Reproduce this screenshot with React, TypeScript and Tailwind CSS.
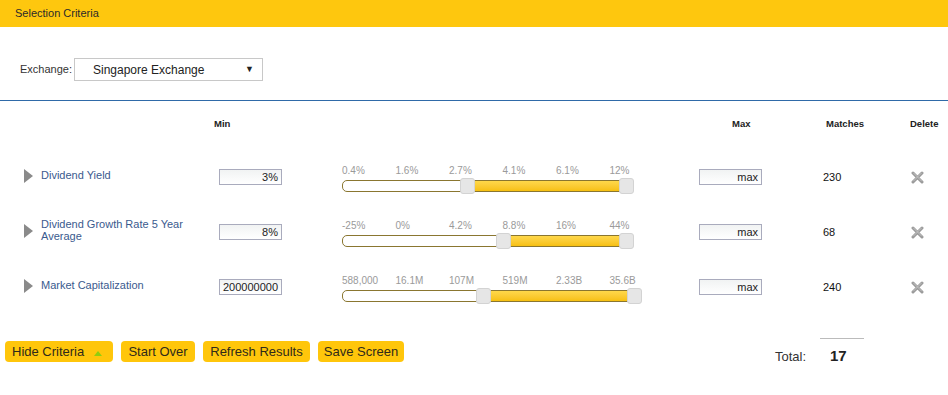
import React from "react";

type Criterion = {
  label: string[];
  min: string;
  ticks: string[];
  trackW: number;
  lo: number;
  hi: number;
  matches: string;
};

const CRITERIA: Criterion[] = [
  { label: ["Dividend Yield"], min: "3%", ticks: ["0.4%", "1.6%", "2.7%", "4.1%", "6.1%", "12%"], trackW: 291, lo: 118, hi: 277, matches: "230" },
  { label: ["Dividend Growth Rate 5 Year", "Average"], min: "8%", ticks: ["-25%", "0%", "4.2%", "8.8%", "16%", "44%"], trackW: 291, lo: 154, hi: 277, matches: "68" },
  { label: ["Market Capitalization"], min: "200000000", ticks: ["588,000", "16.1M", "107M", "519M", "2.33B", "35.6B"], trackW: 299, lo: 134, hi: 285, matches: "240" },
];

function DeleteIcon() {
  return (
    <svg width="13" height="13" viewBox="0 0 13 13">
      <path d="M2 2 L11 11 M11 2 L2 11" stroke="#9a9a9a" strokeWidth="3" strokeLinecap="round" />
      <path d="M2.5 2 L10.5 10 M10.5 2 L2.5 10" stroke="#c4c4c4" strokeWidth="1" strokeLinecap="round" />
    </svg>
  );
}

function Slider({ c }: { c: Criterion }) {
  return (
    <div className="w-[300px] flex flex-col mt-[4px]">
      <div className="grid grid-cols-6 w-[321px] text-[10px] leading-[12px] text-[#9a9a9a]">
        {c.ticks.map((t) => (
          <span key={t}>{t}</span>
        ))}
      </div>
      <div className="relative h-[16px] mt-[1px]" style={{ width: c.trackW }}>
        <div className="absolute left-0 right-0 top-[2px] h-[12px] rounded-[5px] border border-[#8a7630] bg-white" />
        <div
          className="absolute top-[2px] h-[12px] border-y border-[#8a7630] bg-gradient-to-b from-[#ffd84a] to-[#f7c00d]"
          style={{ left: c.lo + 7, width: c.hi - c.lo }}
        />
        <div
          className="absolute top-0 w-[15px] h-[16px] rounded-[3px] border border-[#d3d3d3] bg-[#e6e6e6]"
          style={{ left: c.lo }}
        />
        <div
          className="absolute top-0 w-[15px] h-[16px] rounded-[3px] border border-[#d3d3d3] bg-[#e6e6e6]"
          style={{ left: c.hi }}
        />
      </div>
    </div>
  );
}

function ValueBox({ value }: { value: string }) {
  return (
    <div className="w-[63px] h-[16px] border border-[#a9abbd] bg-gradient-to-b from-[#f1f3f3] to-white text-right pr-[3px] text-[11px] leading-[14px] text-[#222]">
      {value}
    </div>
  );
}

const btn =
  "h-[21px] px-[4px] rounded-[4px] bg-[#ffc60b] text-[13px] text-[#2f2a1a] flex items-center whitespace-nowrap";

export default function App() {
  return (
    <div className="w-[948px] h-[395px] bg-white font-['Liberation_Sans',Arial,sans-serif] text-[#333] overflow-hidden">
      {/* title bar */}
      <div className="h-[27px] bg-[#fec70e] pl-[15px] flex items-center text-[11px] text-[#2a2a2a]">
        Selection Criteria
      </div>

      {/* exchange */}
      <div className="h-[73px] flex items-center pl-[20px] pt-[12px]">
        <span className="text-[11px] text-[#333] mr-[2px]">Exchange:</span>
        <div className="w-[189px] h-[23px] border border-[#c8c8c8] flex items-center pl-[18px] pr-[8px] text-[12px] text-[#222]">
          <span className="flex-1">Singapore Exchange</span>
          <span className="text-[9px]">▼</span>
        </div>
      </div>
      <div className="h-px bg-[#2f6aa8]" />

      {/* column headers */}
      <div className="flex pt-[17px] text-[9.5px] font-semibold text-[#222] leading-[12px]">
        <span className="w-[214px]" />
        <span className="w-[518px]">Min</span>
        <span className="w-[94px]">Max</span>
        <span className="w-[84px]">Matches</span>
        <span>Delete</span>
      </div>

      {/* criteria rows */}
      <div className="flex flex-col pt-[31px] gap-[23px]">
        {CRITERIA.map((c) => (
          <div key={c.matches} className="h-[32px] flex items-center pl-[24px]">
            <div className="w-0 h-0 border-y-[7px] border-y-transparent border-l-[9px] border-l-[#8a8a8a] mr-[8px] -mt-[2px]" />
            <div className="w-[178px] text-[11px] leading-[12px] text-[#3a5a8e] -mt-[4px]">
              {c.label.map((l) => (
                <div key={l}>{l}</div>
              ))}
            </div>
            <ValueBox value={c.min} />
            <div className="w-[60px]" />
            <Slider c={c} />
            <div className="w-[57px]" />
            <ValueBox value="max" />
            <div className="w-[61px]" />
            <span className="w-[88px] text-[11px] text-[#111]">{c.matches}</span>
            <DeleteIcon />
          </div>
        ))}
      </div>

      {/* actions + total */}
      <div className="flex items-start pl-[5px] pt-[38px]">
        <div className="w-[400px] flex gap-[8px]">
          <button className={`${btn} w-[108px] pl-[7px] gap-[10px]`}>
            Hide Criteria
            <span className="w-0 h-0 border-x-[4px] border-x-transparent border-b-[5px] border-b-[#8fce10] mt-[3px]" />
          </button>
          <button className={`${btn} w-[74px] justify-center`}>Start Over</button>
          <button className={`${btn} w-[107px] justify-center`}>Refresh Results</button>
          <button className={`${btn} w-[86px] justify-center`}>Save Screen</button>
        </div>
        <div className="ml-[370px] -mt-[3px] flex items-start">
          <span className="text-[13px] text-[#333] mt-[11px] leading-[16px] w-[55px]">Total:</span>
          <div className="flex flex-col items-start">
            <div className="w-[44px] h-px bg-[#bbbbbb] -ml-[10px]" />
            <span className="mt-[9px] text-[15px] font-bold text-[#222] leading-[16px]">17</span>
          </div>
        </div>
      </div>
    </div>
  );
}
